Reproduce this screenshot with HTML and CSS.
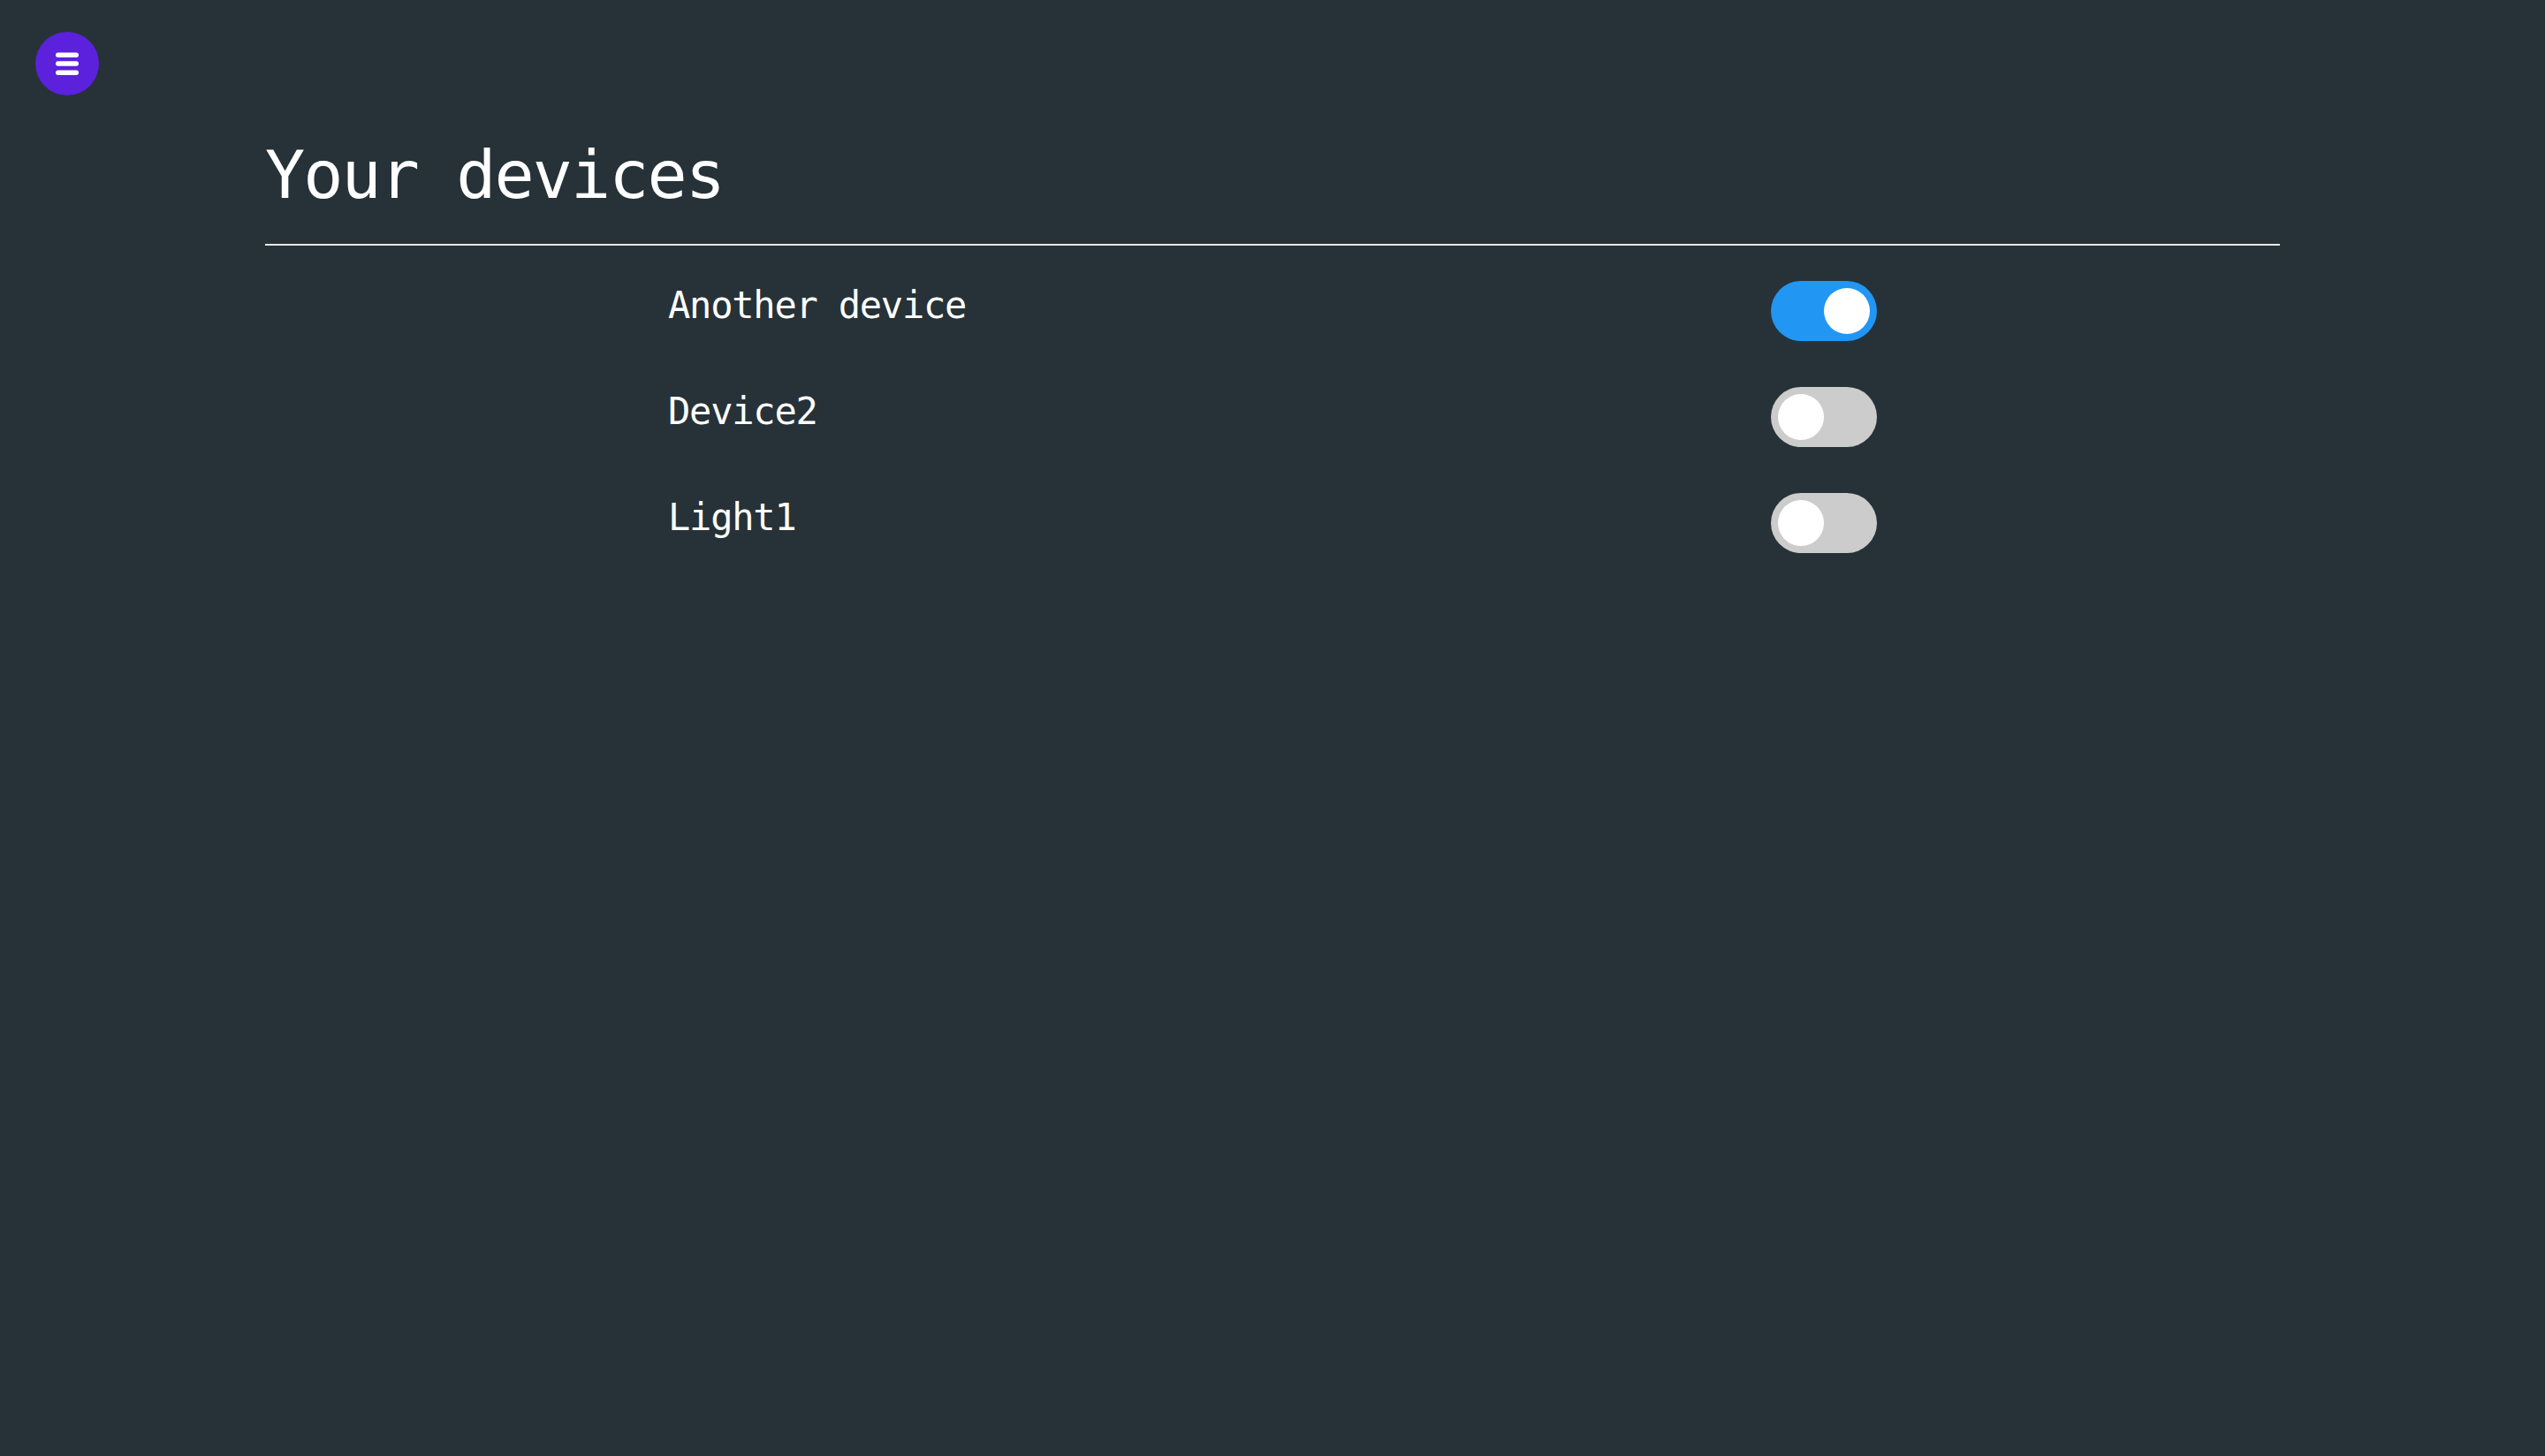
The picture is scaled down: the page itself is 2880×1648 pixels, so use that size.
FILE: index.html
```html
<!DOCTYPE html>
<html lang="en">
<head>
<meta charset="utf-8">
<title>Your devices</title>
<link rel="stylesheet" href="styles.css">
</head>
<body>
<button class="menu-btn" aria-label="Menu">
  <svg class="menu-icon" viewBox="0 0 26 26" width="26" height="26" aria-hidden="true">
    <rect x="0" y="0.5" width="26" height="5.4" rx="2.7" fill="#ffffff"/>
    <rect x="0" y="10.3" width="26" height="5.4" rx="2.7" fill="#ffffff"/>
    <rect x="0" y="20.5" width="26" height="5.4" rx="2.7" fill="#ffffff"/>
  </svg>
</button>
<main class="page">
  <h1 class="title">Your devices</h1>
  <ul class="device-list">
    <li class="device-row">
      <span class="device-name">Another device</span>
      <span class="switch switch-on" role="switch" aria-checked="true"><span class="knob"></span></span>
    </li>
    <li class="device-row">
      <span class="device-name">Device2</span>
      <span class="switch" role="switch" aria-checked="false"><span class="knob"></span></span>
    </li>
    <li class="device-row">
      <span class="device-name">Light1</span>
      <span class="switch" role="switch" aria-checked="false"><span class="knob"></span></span>
    </li>
  </ul>
</main>
</body>
</html>
```
FILE: styles.css
```css
html, body {
  margin: 0;
  padding: 0;
}
html {
  background: #263238;
}
body {
  background: #263238;
  color: #ffffff;
  font-family: "DejaVu Sans Mono", "Liberation Mono", monospace;
}
.menu-btn {
  position: fixed;
  left: 40px;
  top: 36px;
  width: 72px;
  height: 72px;
  border-radius: 50%;
  border: none;
  padding: 0;
  margin: 0;
  background: #5b21dc;
  display: flex;
  align-items: center;
  justify-content: center;
  cursor: pointer;
}
.menu-icon {
  display: block;
}
.page {
  margin: 0 300px;
  padding-top: 154px;
}
.title {
  margin: 0;
  font-weight: normal;
  font-size: 75px;
  line-height: 88px;
  letter-spacing: -1.9px;
  padding-bottom: 34px;
  border-bottom: 2px solid #e8e8e8;
}
.device-list {
  list-style: none;
  margin: 40px auto 0;
  padding: 0;
  width: 1368px;
  display: flex;
  flex-direction: column;
  gap: 52px;
}
.device-row {
  display: flex;
  justify-content: space-between;
  align-items: flex-start;
  height: 68px;
}
.device-name {
  font-size: 42px;
  line-height: 48px;
  letter-spacing: -1.2px;
  margin-top: 4px;
}
.switch {
  width: 120px;
  height: 68px;
  box-sizing: border-box;
  padding: 8px;
  border-radius: 34px;
  background: #cccccc;
  display: flex;
  justify-content: flex-start;
}
.switch-on {
  background: #2196f3;
  justify-content: flex-end;
}
.knob {
  width: 52px;
  height: 52px;
  border-radius: 50%;
  background: #ffffff;
}
```
